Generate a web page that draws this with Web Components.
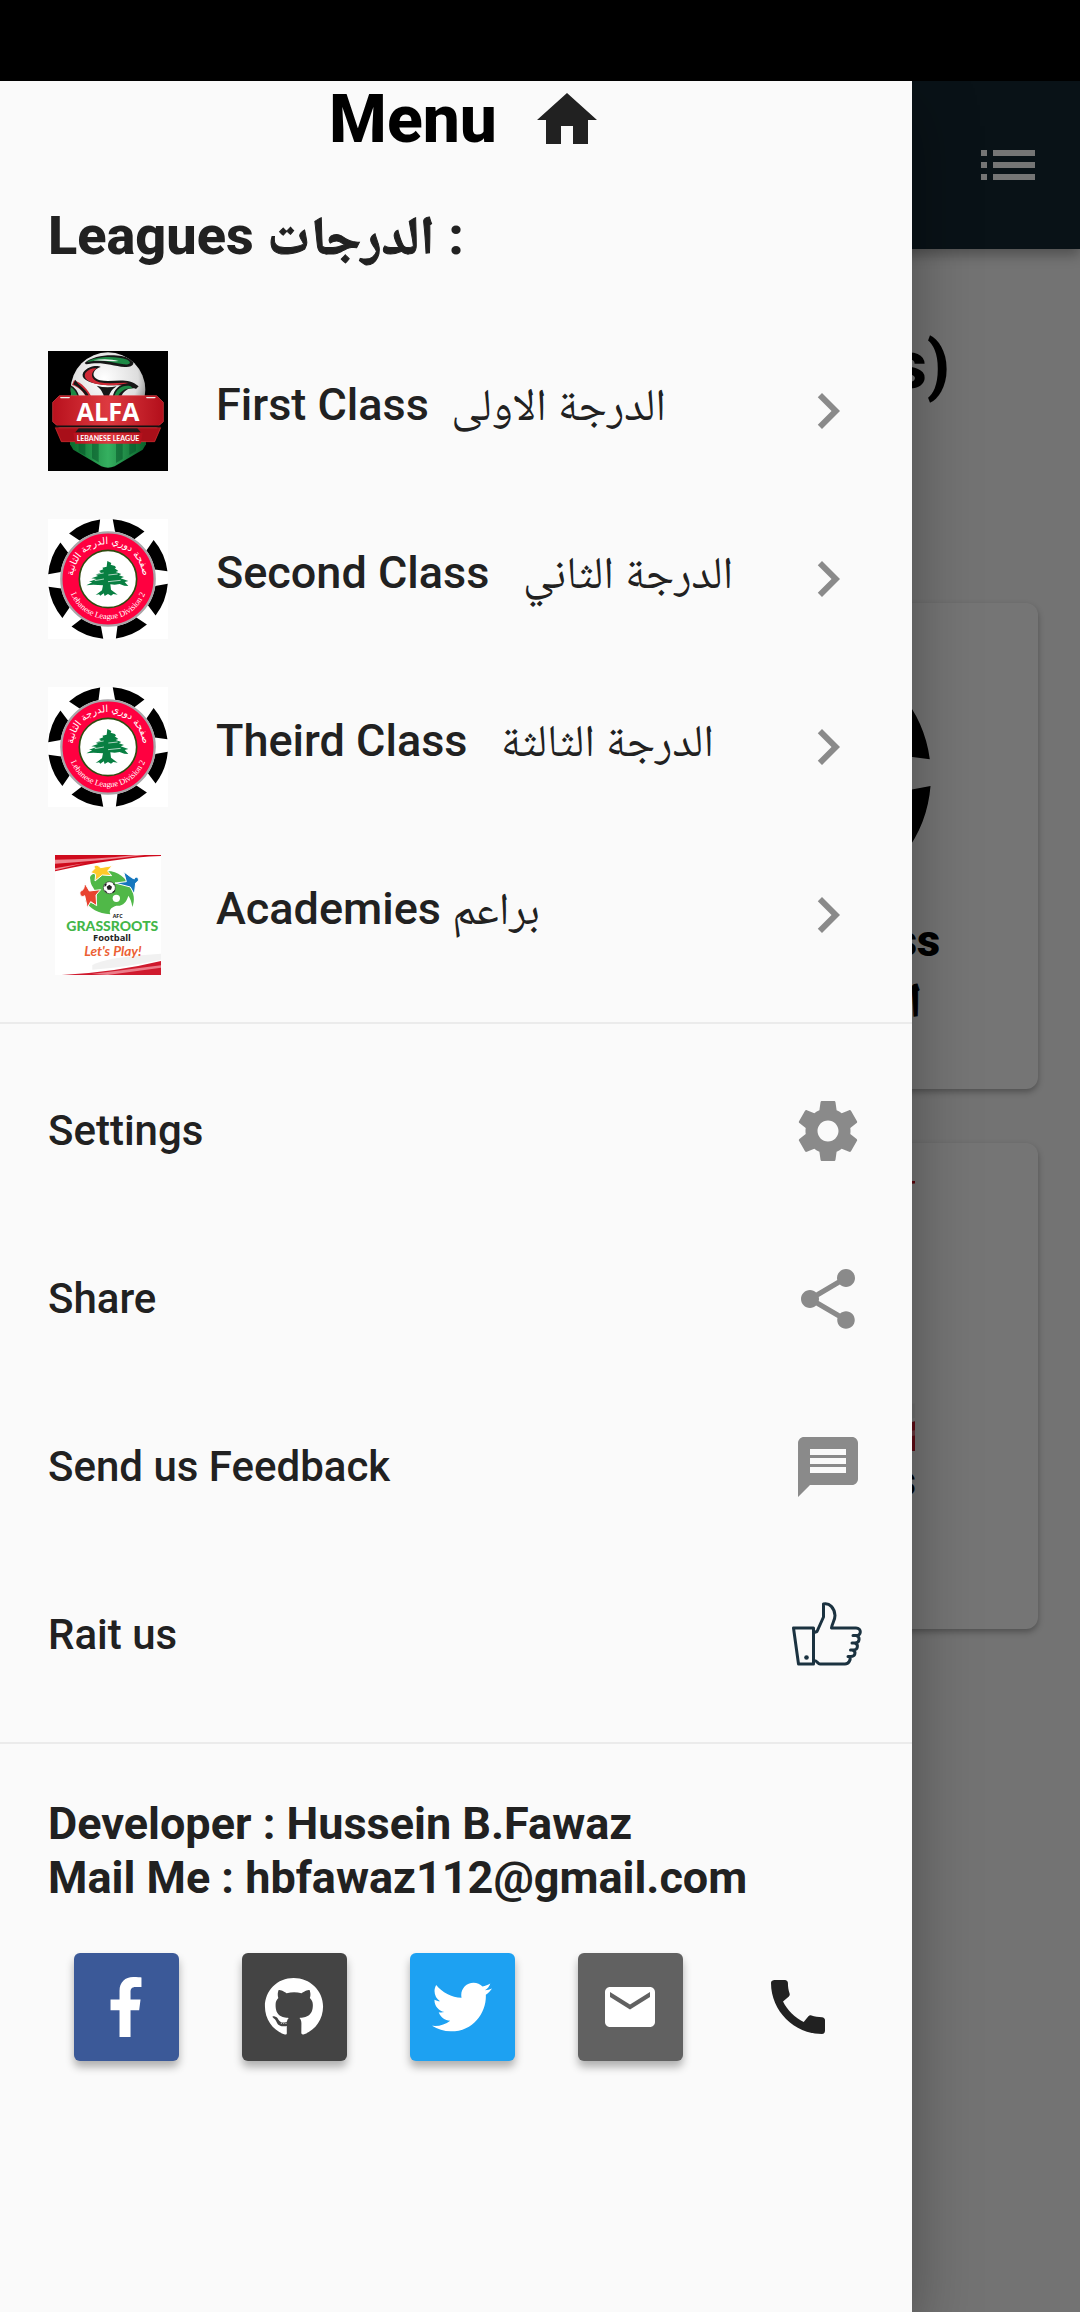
<!DOCTYPE html>
<html lang="en">
<head>
<meta charset="utf-8">
<meta name="viewport" content="width=device-width, initial-scale=1">
<title>Leagues</title>
<style>
  body { margin: 0; background: #000; color: #212121; font-family: Roboto, "Noto Naskh Arabic", "Noto Sans Arabic", "DejaVu Sans", sans-serif; }
</style>
</head>
<body>
<app-shell>
  <home-page slot="page"></home-page>
  <nav-drawer slot="drawer"></nav-drawer>
</app-shell>

<script>
function define(name, html) {
  const template = document.createElement('template');
  template.innerHTML = html;
  customElements.define(name, class extends HTMLElement {
    constructor() {
      super();
      this.attachShadow({ mode: 'open' }).append(template.content.cloneNode(true));
    }
  });
}

const ICONS = {
  home: ['0 0 24 24', '<path d="M10 20v-6h4v6h5v-8h3L12 3 2 12h3v8z"/>'],
  list: ['0 0 24 24', '<path d="M3 13h2v-2H3v2zm0 4h2v-2H3v2zm0-8h2V7H3v2zm4 4h14v-2H7v2zm0 4h14v-2H7v2zM7 7v2h14V7H7z"/>'],
  chevron: ['0 0 24 24', '<path d="M10 6L8.590 7.410 13.170 12l-4.580 4.590L10 18l6-6z"/>'],
  settings: ['0 0 24 24', '<path d="M19.430 12.980c.04-.32.07-.64.07-.98s-.03-.66-.07-.98l2.110-1.650c.19-.15.24-.42.12-.64l-2-3.460c-.12-.22-.39-.3-.61-.22l-2.490 1c-.52-.4-1.080-.73-1.690-.98l-.38-2.650C14.460 2.180 14.250 2 14 2h-4c-.25 0-.46.18-.49.42l-.38 2.650c-.61.25-1.170.59-1.690.98l-2.490-1c-.23-.09-.49 0-.61.22l-2 3.460c-.13.22-.07.49.12.64l2.110 1.650c-.04.32-.07.65-.07.98s.03.66.07.98l-2.110 1.650c-.19.15-.24.42-.12.64l2 3.460c.12.22.39.3.61.22l2.490-1c.52.4 1.080.73 1.690.98l.38 2.650c.03.24.24.42.49.42h4c.25 0 .46-.18.49-.42l.38-2.650c.61-.25 1.170-.59 1.690-.98l2.490 1c.23.09.49 0 .61-.22l2-3.460c.12-.22.07-.49-.12-.64l-2.110-1.650zM12 15.500c-1.930 0-3.500-1.570-3.500-3.500s1.570-3.500 3.500-3.500 3.500 1.570 3.500 3.500-1.570 3.500-3.500 3.500z"/>'],
  share: ['0 0 24 24', '<path d="M18 16.080c-.76 0-1.440.3-1.960.77L8.910 12.700c.05-.23.09-.46.09-.7s-.04-.47-.09-.7l7.050-4.110c.54.5 1.250.81 2.040.81 1.660 0 3-1.340 3-3s-1.340-3-3-3-3 1.340-3 3c0 .24.04.47.09.7L8.040 9.810C7.500 9.310 6.790 9 6 9c-1.660 0-3 1.340-3 3s1.340 3 3 3c.79 0 1.500-.31 2.040-.81l7.120 4.160c-.05.21-.08.43-.08.65 0 1.610 1.310 2.920 2.920 2.920s2.920-1.310 2.920-2.920-1.310-2.920-2.920-2.920z"/>'],
  feedback: ['0 0 24 24', '<path d="M20 2H4c-1.100 0-1.990.9-1.990 2L2 22l4-4h14c1.100 0 2-.9 2-2V4c0-1.100-.9-2-2-2zM6 9h12v2H6V9zm12 5H6v-2h12v2zm0-6H6V6h12v2z"/>'],
  thumb: ['0 0 72 72', '<g fill="none" stroke="#1b3240" stroke-width="3" stroke-linejoin="round" stroke-linecap="round"><path d="M1.500 29H21.500V65H6.500z"/><path d="M22 33.500L25 32.500 31.500 18V5c6-1.500 11 4 11.500 11.500 0 5-3 8-3.500 12.500H64c6 0 5.500 8 0 7.500h-3 3c4.500 1 4 7.500-1 7.500h-3 2.500c4.500 1 3.500 7-1 7h-3 2c4 1.500 3 6.500-2 6.500h-2.500 1.500c2 3-1 7.500-4.500 7.500H28c-2.500 0-2.500-3.500-6-3.500"/></g><circle cx="14.500" cy="58.500" r="2.300" fill="#1b3240"/>'],
  facebook: ['-124 0 512 512', '<path d="M76.700 512V283H0v-91h76.700v-71.700C76.700 42.400 124.300 0 193.800 0c33.300 0 61.900 2.500 70.200 3.600V85h-48.200c-37.800 0-45.100 18-45.100 44.300V192H256l-11.700 91h-73.600v229z"/>'],
  github: ['-8 0 512 512', '<path d="M165.900 397.400c0 2-2.300 3.600-5.200 3.600-3.300.3-5.600-1.300-5.600-3.600 0-2 2.300-3.600 5.200-3.600 3-.3 5.600 1.300 5.600 3.600zm-31.100-4.500c-.7 2 1.300 4.300 4.300 4.900 2.600 1 5.600 0 6.200-2s-1.300-4.300-4.300-5.200c-2.600-.7-5.500.3-6.200 2.300zm44.200-1.700c-2.900.7-4.900 2.600-4.600 4.900.3 2 2.900 3.300 5.900 2.600 2.900-.7 4.900-2.600 4.600-4.600-.3-1.900-3-3.200-5.900-2.900zM244.800 8C106.100 8 0 113.300 0 252c0 110.900 69.800 205.800 169.500 239.200 12.800 2.300 17.300-5.600 17.300-12.100 0-6.200-.3-40.400-.3-61.400 0 0-70 15-84.700-29.800 0 0-11.400-29.100-27.800-36.600 0 0-22.900-15.700 1.600-15.400 0 0 24.900 2 38.600 25.800 21.900 38.600 58.600 27.500 72.900 20.900 2.300-16 8.800-27.100 16-33.700-55.900-6.200-112.300-14.300-112.300-110.500 0-27.500 7.600-41.300 23.600-58.900-2.600-6.500-11.100-33.300 2.600-67.900 20.900-6.500 69 27 69 27 20-5.600 41.500-8.500 62.800-8.500s42.800 2.900 62.800 8.500c0 0 48.100-33.600 69-27 13.700 34.700 5.200 61.400 2.600 67.900 16 17.700 25.800 31.500 25.800 58.900 0 96.500-58.900 104.200-114.800 110.500 9.200 7.900 17 22.900 17 46.400 0 33.700-.3 75.400-.3 83.600 0 6.500 4.600 14.400 17.300 12.100C428.200 457.800 496 362.900 496 252 496 113.300 383.500 8 244.800 8z"/>'],
  twitter: ['0 0 512 512', '<path d="M459.370 151.716c.325 4.548.325 9.097.325 13.645 0 138.720-105.583 298.558-298.558 298.558-59.452 0-114.680-17.219-161.137-47.106 8.447.974 16.568 1.299 25.340 1.299 49.055 0 94.213-16.568 130.274-44.832-46.132-.975-84.792-31.188-98.112-72.772 6.498.974 12.995 1.624 19.818 1.624 9.421 0 18.843-1.300 27.614-3.573-48.081-9.747-84.143-51.980-84.143-102.985v-1.299c13.969 7.797 30.214 12.670 47.431 13.319-28.264-18.843-46.781-51.005-46.781-87.391 0-19.492 5.197-37.360 14.294-52.954 51.655 63.675 129.300 105.258 216.365 109.807-1.624-7.797-2.599-15.918-2.599-24.040 0-57.828 46.782-104.934 104.934-104.934 30.213 0 57.502 12.670 76.670 33.137 23.715-4.548 46.456-13.320 66.599-25.340-7.798 24.366-24.366 44.833-46.132 57.827 21.117-2.273 41.584-8.122 60.426-16.243-14.292 20.791-32.161 39.308-52.628 54.253z"/>'],
  mail: ['0 0 24 24', '<path d="M20 4H4c-1.100 0-1.990.9-1.990 2L2 18c0 1.100.9 2 2 2h16c1.100 0 2-.9 2-2V6c0-1.100-.9-2-2-2zm0 4l-8 5-8-5V6l8 5 8-5v2z"/>'],
  phone: ['0 0 24 24', '<path d="M20.010 15.380c-1.230 0-2.420-.2-3.530-.56-.35-.12-.74-.03-1.010.24l-1.570 1.970c-2.830-1.350-5.480-3.900-6.890-6.830l1.950-1.660c.27-.28.35-.67.24-1.020-.37-1.110-.56-2.300-.56-3.530 0-.54-.45-.99-.99-.99H4.190C3.650 3 3 3.240 3 3.990 3 13.280 10.730 21 20.010 21c.71 0 .99-.63.99-1.180v-3.450c0-.54-.45-.99-.99-.99z"/>']
};

customElements.define('ui-icon', class extends HTMLElement {
  connectedCallback() {
    if (this.shadowRoot) return;
    const [box, body] = ICONS[this.getAttribute('name')];
    this.attachShadow({ mode: 'open' }).innerHTML = `
      <style>:host{display:block;flex:none;width:var(--icon-size,72px);height:var(--icon-size,72px)} svg{display:block;width:100%;height:100%;fill:currentColor}</style>
      <svg viewBox="${box}" aria-hidden="true">${body}</svg>`;
  }
});

const spokes = [0, 1, 2, 3, 4, 5, 6, 7].map(i =>
  `<path transform="rotate(${21 + i * 45} 180 180)" d="M129 7.500A180 180 0 0 1 231 7.500L211 40A144 144 0 0 0 149 40z"/>`).join('');

const LOGOS = {
  alfa: ['0 0 360 360', `
    <defs>
      <radialGradient id="ball" cx=".45" cy=".35" r=".65"><stop offset="0" stop-color="#fff"/><stop offset=".7" stop-color="#ddd"/><stop offset="1" stop-color="#777"/></radialGradient>
      <linearGradient id="red"><stop offset="0" stop-color="#b8111d"/><stop offset=".5" stop-color="#dd3a40"/><stop offset="1" stop-color="#b30f1b"/></linearGradient>
      <linearGradient id="green"><stop offset="0" stop-color="#0a6a2c"/><stop offset=".5" stop-color="#35b060"/><stop offset="1" stop-color="#08612a"/></linearGradient>
      <clipPath id="ballclip"><circle cx="180" cy="116" r="112"/></clipPath>
    </defs>
    <rect width="360" height="360"/>
    <circle cx="180" cy="116" r="112" fill="url(#ball)"/>
    <g clip-path="url(#ballclip)">
      <path d="M110 36C140 8 214 8 244 22c22 14 12 28-14 26-40-4-70-18-116-8z" fill="#171717"/>
      <path d="M116 32C146 14 206 14 238 26c14 8 8 16-10 14-38-6-68-16-106-8z" fill="#1d8a45"/>
      <path d="M136 28c28-6 54-4 76 2-30 2-50-2-76-2z" fill="#f4f4f4"/>
      <path d="M106 64c14-20 44-22 52-16-26 8-30 32-2 40 40 8 80-12 116 18l-8 8c-30-20-70-6-110-14-36-6-58-18-48-36z" fill="#171717"/>
      <path d="M112 66c8-12 24-16 34-14-20 12-20 34 8 42 30 6 60 0 88 2-30 6-62 10-92 4-28-6-46-18-38-34z" fill="#cf2a36"/>
      <path d="M146 104q28 8 60 2-22 14-24 34h-14q-2-20-22-36z" fill="#171717"/>
      <path d="M194 140c4-32 30-48 62-40l4 12c-20-2-34 8-42 28z" fill="#171717"/>
      <path d="M198 140c6-26 26-40 50-34l6 6c-26 0-38 10-46 28z" fill="#1d8a45"/>
      <path d="M78 88c24 8 40 26 54 52h-16c-10-18-24-32-44-38z" fill="#c92a35"/>
      <path d="M82 86c10 20 36 28 42 54h-8c-8-18-26-34-40-40z" fill="#171717"/>
      <path d="M66 104q20 10 26 36H66z" fill="#1d8a45" stroke="#171717" stroke-width="5"/>
    </g>
    <path d="M66 262h228v18l-10 16-84 50q-20 8-40 0l-84-50-10-16z" fill="url(#green)"/>
    <path d="M92 270v32l20 12v-44zm40 0v52l20 12v-64zm72 0v66l20-12v-54zm40 0v42l20-12v-30z" fill="#07552a" opacity=".55"/>
    <path d="M22 230h316l-18 42H40z" fill="#a80f19" stroke="#d33" stroke-width="2"/>
    <path d="M92 232h176l10 12H82z" fill="#1b1b1b"/>
    <path d="M76 246h208l-6 32H82z" fill="url(#red)"/>
    <path d="M34 134h292l20 20v58l-20 18H34l-20-18v-58z" fill="url(#red)" stroke="#db4146" stroke-width="2"/>
    <path d="M36 138h30l-2 4H38zm258 0h30l-4 4h-24z" fill="#eee"/>
    <path d="M22 226h316" stroke="#111" stroke-width="5"/>
    <text x="180" y="209" text-anchor="middle" fill="#fff" font-family="Open Sans" font-weight="700" font-size="76">ALFA</text>
    <text x="180" y="269" text-anchor="middle" fill="#fff" font-family="Lato" font-weight="700" font-size="21">LEBANESE LEAGUE</text>`],
  division: ['0 0 360 360', `
    <defs><path id="upper" d="M75 180a105 105 0 0 1 210 0"/><path id="lower" d="M60 180a120 120 0 0 0 240 0"/></defs>
    <rect width="360" height="360" fill="#fff"/>${spokes}
    <circle cx="180" cy="180" r="140" fill="#ff0040" stroke="#a9a5a9" stroke-width="7"/>
    <circle cx="180" cy="180" r="86" fill="#fff" stroke="#304b10" stroke-width="5"/>
    <path fill="#087f42" d="M178 126l12 6-2 5 13 4 3 5-4 2 11 8-8 3 17 6-7 4 15 5-10 4 23 8-11 3 11 12-12-1-14-5-15 2-13-1 2 16 20 15-13-2-7 5-9-5-10 6-3-8-10 7-4-4-10 2 19-14 3-15-29-2-21 2 18-9-10-2 23-8-16-2 20-7-7-4 16-7-6-4 13-5-3-5 13-3z"/>
    <path d="M143 166l24-4m14 6l28-3m-69 20l28-5m12 8l38-4m-81-36l26-3" stroke="#fff" stroke-width="2"/>
    <text fill="#fff" font-size="29" font-family="DejaVu Sans"><textPath href="#upper" startOffset="50%" text-anchor="middle">صفحة دوري الدرجة الثانية</textPath></text>
    <text fill="#fff" font-size="25" font-family="Liberation Serif"><textPath href="#lower" startOffset="50%" text-anchor="middle">Lebanese League Division 2</textPath></text>`],
  grassroots: ['0 0 318 360', `
    <rect width="318" height="360" fill="#fff"/>
    <path d="M0 0h318v3Q180 8 0 49z" fill="#cf0b1d"/><path d="M0 14Q120 14 240 0h30Q120 20 0 26zM0 40l90-16-90 22z" fill="#ef8690"/>
    <path d="M20 360q160-8 298-42v42z" fill="#cf1a2e"/><path d="M110 357l208-26v7l-160 22z" fill="#ec7d8a"/>
    <path d="M112 330q40-24 206-34v18q-100 22-206 30z" fill="#f1f1f1"/>
    <path d="M106 74c-6-16 18-25 50-26 34 0 58 22 68 46 14 22 16 42 8 62-2-16-6-26-12-34-6 20-16 32-36 30-12 4-24 10-18 26-36-2-62-16-76-42l24 10c8-2 14-14 10-28-4-18-18-26-18-44z" fill="#50b848"/>
    <path d="M108 52l12-12-4-4c4-6 12-8 20 2l36-6-14 16 12 14-28-2-22 18 2-20-16-6z" fill="#ffc928" stroke="#fff" stroke-width="3"/>
    <path d="M180 84l34-4-8-30 24 18 8 4c2-8 14-8 12 6l-8 6-4 34-12-22z" fill="#1476bd" stroke="#fff" stroke-width="3"/>
    <path d="M75 110c8-6 12-2 14-26l14 24 34-4-14 16 2 32-18-12-10 18-8-36c-8 6-16 0-14-12z" fill="#e8432f" stroke="#fff" stroke-width="3"/>
    <circle cx="163" cy="98" r="18" fill="#fff" stroke="#333" stroke-width="2"/><path d="M163 89l8 6-3 9h-10l-3-9zm-15 0l6-6 1 7-6 6zm28-6l4 8-5-1zm-4 28l8-6 1 3-7 7zm-23-6l8 7-2 2-6-5z" fill="#222"/>
    <circle cx="184" cy="130" r="11" fill="#fff"/>
    <text x="188" y="189" text-anchor="middle" font-family="Open Sans" font-weight="700" font-size="16" fill="#222">AFC</text>
    <text x="172" y="227" text-anchor="middle" font-family="Lato" font-weight="900" font-size="42" fill="#43b649">GRASSROOTS</text>
    <text x="171" y="258" text-anchor="middle" font-family="Open Sans" font-weight="700" font-size="28" fill="#222">Football</text>
    <text x="174" y="302" text-anchor="middle" font-family="Lato" font-weight="700" font-style="italic" font-size="41" fill="#ec6034">Let's Play!</text>`]
};

customElements.define('league-logo', class extends HTMLElement {
  connectedCallback() {
    if (this.shadowRoot) return;
    const [box, body] = LOGOS[this.getAttribute('name')];
    const art = this.hasAttribute('emblem') ? body.replace(/<text [\s\S]*?<\/text>/g, '') : body;
    this.attachShadow({ mode: 'open' }).innerHTML = `
      <style>:host{display:block;flex:none;width:var(--logo-width,120px);height:var(--logo-height,120px)} svg{display:block;width:100%;height:100%}</style>
      <svg viewBox="${box}" preserveAspectRatio="xMidYMid ${this.getAttribute('fit') || 'meet'}">${art}</svg>`;
  }
});

define('app-shell', `
  <style>
    :host { display: flex; flex-direction: column; min-height: 100vh; }
    .status { height: 81px; background: #000; }
    .stage { flex: 1; display: grid; overflow: hidden; }
    .stage > * { grid-area: 1 / 1; }
    .scrim { background: rgba(0,0,0,.54); z-index: 1; }
    .over { z-index: 2; display: grid; margin-right: 168px; }
    .page { display: grid; }
  </style>
  <div class="status"></div>
  <div class="stage">
    <div class="page"><slot name="page"></slot></div>
    <div class="scrim"></div>
    <div class="over"><slot name="drawer"></slot></div>
  </div>`);

define('home-page', `
  <style>
    :host { display: block; background: #fafafa; color: #000; }
    header { display: flex; align-items: center; justify-content: flex-end; height: 168px; padding: 0 36px; background: #152833; box-shadow: 0 6px 12px rgba(0,0,0,.3); }
    button { border: 0; padding: 0; background: none; color: #fff; }
    h1 { margin: 0; padding: 78px 130px 0; text-align: right; font-size: 66px; line-height: 78px; font-weight: 800; }
    .cards { display: grid; grid-template-columns: 1fr 1fr; gap: 54px; padding: 198px 42px 54px; }
    league-card { grid-column: 2; --logo-height: 270px; }
    [name=division] { --logo-width: 256px; }
    [name=grassroots] { --logo-width: 224px; }
    [lang=ar] { font-size: 48px; -webkit-text-stroke: 1px currentColor; }
  </style>
  <header><button aria-label="List"><ui-icon name="list"></ui-icon></button></header>
  <h1>(Leagues)</h1>
  <div class="cards">
    <league-card><league-logo slot="logo" name="division" emblem></league-logo>Second Class<br><span lang="ar" dir="rtl">الدرجة الثانية</span></league-card>
    <league-card><league-logo slot="logo" name="grassroots" fit="slice" emblem></league-logo>Academies<br><span lang="ar" dir="rtl">براعم</span></league-card>
  </div>`);

define('league-card', `
  <style>
    :host { box-sizing: border-box; display: flex; flex-direction: column; align-items: center; height: 486px; padding-top: 38px; border-radius: 12px; background: #fff; box-shadow: 0 3px 6px rgba(0,0,0,.3); text-align: center; }
    div { font-size: 45px; line-height: 60px; font-weight: 900; }
  </style>
  <slot name="logo"></slot><div><slot></slot></div>`);

define('nav-drawer', `
  <style>
    :host { display: block; background: #fafafa; box-shadow: 0 24px 60px rgba(0,0,0,.34); }
    header { display: flex; align-items: center; justify-content: center; gap: 34px; padding: 3px 0 0 20px; color: #000; }
    h1, h2, p { margin: 0; }
    h1 { font-size: 66px; line-height: 72px; font-weight: 800; }
    .home { color: #212121; }
    h2 { padding: 48px 48px 60px; font-size: 54px; line-height: 63px; font-weight: 800; white-space: nowrap; }
    h2 [lang=ar] { -webkit-text-stroke: 1px currentColor; }
    hr { margin: 23px 0; border: 0; border-top: 2px solid #ebebeb; }
    .contact { padding: 30px 48px 48px; font-size: 45px; line-height: 54px; font-weight: 700; }
    .social { display: grid; grid-template-columns: repeat(5, 168px); padding-left: 42px; }
  </style>
  <header><h1>Menu</h1><a class="home" href="#home" aria-label="Home"><ui-icon name="home"></ui-icon></a></header>
  <h2>Leagues <span lang="ar">الدرجات</span> :</h2>
  <nav>
    <league-row><league-logo slot="logo" name="alfa"></league-logo>First Class&nbsp; <span lang="ar">الدرجة الاولى</span></league-row>
    <league-row><league-logo slot="logo" name="division"></league-logo>Second Class&nbsp;&nbsp; <span lang="ar">الدرجة الثاني</span></league-row>
    <league-row><league-logo slot="logo" name="division"></league-logo>Theird Class&nbsp;&nbsp; <span lang="ar">الدرجة الثالثة</span></league-row>
    <league-row><league-logo slot="logo" name="grassroots"></league-logo>Academies <span lang="ar">براعم</span></league-row>
  </nav>
  <hr>
  <action-row>Settings<ui-icon slot="icon" name="settings"></ui-icon></action-row>
  <action-row>Share<ui-icon slot="icon" name="share"></ui-icon></action-row>
  <action-row>Send us Feedback<ui-icon slot="icon" name="feedback"></ui-icon></action-row>
  <action-row>Rait us<ui-icon slot="icon" name="thumb"></ui-icon></action-row>
  <hr>
  <div class="contact"><p>Developer : Hussein B.Fawaz</p><p>Mail Me : hbfawaz112@gmail.com</p></div>
  <div class="social">
    <social-button label="Facebook" style="--card:#3b5998"><ui-icon name="facebook"></ui-icon></social-button>
    <social-button label="GitHub" style="--card:#444444"><ui-icon name="github"></ui-icon></social-button>
    <social-button label="Twitter" style="--card:#1da1f2"><ui-icon name="twitter"></ui-icon></social-button>
    <social-button label="Mail" style="--card:#616161"><ui-icon name="mail"></ui-icon></social-button>
    <social-button label="Phone" plain><ui-icon name="phone"></ui-icon></social-button>
  </div>`);

define('league-row', `
  <style>
    :host { display: block; }
    a { display: flex; align-items: center; gap: 48px; height: 168px; padding: 0 48px; color: inherit; text-decoration: none; }
    .label { flex: 1; padding-bottom: 12px; font-size: 45px; line-height: 54px; font-weight: 500; white-space: nowrap; }
    ui-icon { color: #8a8a8a; }
    ::slotted([lang=ar]) { font-weight: 400; }
  </style>
  <a href="#league"><slot name="logo"></slot><span class="label"><slot></slot></span><ui-icon name="chevron"></ui-icon></a>`);

define('action-row', `
  <style>
    :host { display: block; }
    button { display: flex; align-items: center; justify-content: space-between; width: 100%; height: 168px; padding: 0 48px; border: 0; background: none; color: inherit; font: 500 42px/48px Roboto, sans-serif; text-align: left; }
    ::slotted(ui-icon) { color: #8a8a8a; }
  </style>
  <button><span><slot></slot></span><slot name="icon"></slot></button>`);

define('social-button', `
  <style>
    :host { --icon-size: 60px; display: flex; justify-content: center; color: #fff; }
    button { display: flex; align-items: center; justify-content: center; width: 105px; height: 108px; padding: 0; border: 0; border-radius: 6px; background: var(--card); color: inherit; box-shadow: 0 6px 9px rgba(0,0,0,.3); }
    :host([plain]) { --icon-size: 72px; --card: transparent; color: #212121; }
    :host([plain]) button { box-shadow: none; }
  </style>
  <button><slot></slot></button>`);
document.querySelector('nav-drawer').shadowRoot.querySelectorAll('social-button').forEach(b =>
  b.shadowRoot.querySelector('button').setAttribute('aria-label', b.getAttribute('label')));
</script>
</body>
</html>
